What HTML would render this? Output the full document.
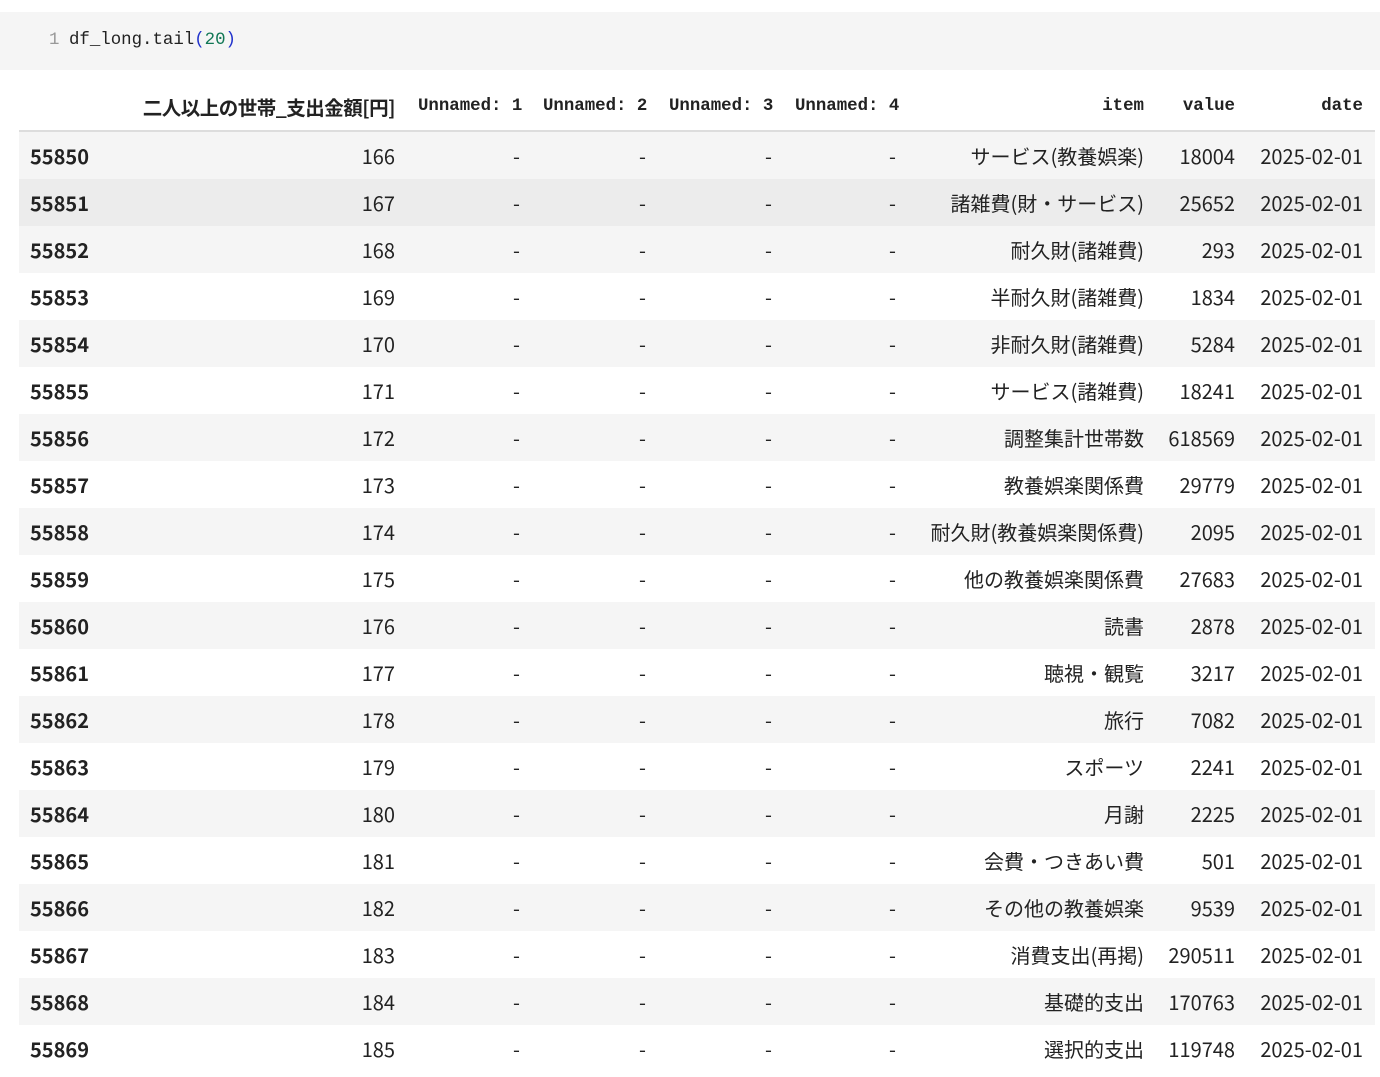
<!DOCTYPE html>
<html><head><meta charset="utf-8"><style>
body{margin:0;background:#fff;width:1380px;height:1077px;overflow:hidden;font-family:"Liberation Sans","Noto Sans CJK JP",sans-serif;color:#111;}
.code{position:absolute;left:0;top:12px;width:1380px;height:58px;background:#f5f5f5;font-family:"Liberation Mono","Noto Sans CJK JP",monospace;font-size:17.4px;line-height:58px;}
.code .n{position:absolute;left:49px;color:#999;}
.code .t{position:absolute;left:69px;color:#222;}
table{position:absolute;left:19px;top:83px;border-collapse:collapse;table-layout:fixed;width:1356px;}
th,td{padding:0 12px 0 11px;text-align:right;white-space:nowrap;overflow:visible;}
thead th{height:47px;border-bottom:2px solid #ddd;font-family:"Liberation Mono","Noto Sans CJK JP",monospace;font-size:17.4px;font-weight:bold;color:#222;}
thead th.jp{font-family:"Noto Sans CJK JP",sans-serif;font-size:19.5px;letter-spacing:-0.5px;}
tbody td,tbody th{height:47px;font-family:"Noto Sans CJK JP",sans-serif;font-size:20px;color:#222;}
tbody th{text-align:left;font-weight:bold;}
tbody tr:nth-child(odd){background:#f5f5f5;}
tbody tr.h{background:#ececec;}
</style></head><body>
<div class="code"><span class="n">1</span><span class="t">df_long.tail<span style="color:#2233cc">(</span><span style="color:#117755">20</span><span style="color:#2233cc">)</span></span></div>
<table>
<colgroup><col style="width:81px"><col style="width:307px"><col style="width:125px"><col style="width:126px"><col style="width:126px"><col style="width:124px"><col style="width:248px"><col style="width:91px"><col style="width:128px"></colgroup>
<thead><tr><th></th><th class="jp">二人以上の世帯_支出金額[円]</th><th>Unnamed: 1</th><th>Unnamed: 2</th><th>Unnamed: 3</th><th>Unnamed: 4</th><th>item</th><th>value</th><th>date</th></tr></thead>
<tbody>
<tr><th>55850</th><td>166</td><td>-</td><td>-</td><td>-</td><td>-</td><td>サービス(教養娯楽)</td><td>18004</td><td>2025-02-01</td></tr>
<tr class="h"><th>55851</th><td>167</td><td>-</td><td>-</td><td>-</td><td>-</td><td>諸雑費(財・サービス)</td><td>25652</td><td>2025-02-01</td></tr>
<tr><th>55852</th><td>168</td><td>-</td><td>-</td><td>-</td><td>-</td><td>耐久財(諸雑費)</td><td>293</td><td>2025-02-01</td></tr>
<tr><th>55853</th><td>169</td><td>-</td><td>-</td><td>-</td><td>-</td><td>半耐久財(諸雑費)</td><td>1834</td><td>2025-02-01</td></tr>
<tr><th>55854</th><td>170</td><td>-</td><td>-</td><td>-</td><td>-</td><td>非耐久財(諸雑費)</td><td>5284</td><td>2025-02-01</td></tr>
<tr><th>55855</th><td>171</td><td>-</td><td>-</td><td>-</td><td>-</td><td>サービス(諸雑費)</td><td>18241</td><td>2025-02-01</td></tr>
<tr><th>55856</th><td>172</td><td>-</td><td>-</td><td>-</td><td>-</td><td>調整集計世帯数</td><td>618569</td><td>2025-02-01</td></tr>
<tr><th>55857</th><td>173</td><td>-</td><td>-</td><td>-</td><td>-</td><td>教養娯楽関係費</td><td>29779</td><td>2025-02-01</td></tr>
<tr><th>55858</th><td>174</td><td>-</td><td>-</td><td>-</td><td>-</td><td>耐久財(教養娯楽関係費)</td><td>2095</td><td>2025-02-01</td></tr>
<tr><th>55859</th><td>175</td><td>-</td><td>-</td><td>-</td><td>-</td><td>他の教養娯楽関係費</td><td>27683</td><td>2025-02-01</td></tr>
<tr><th>55860</th><td>176</td><td>-</td><td>-</td><td>-</td><td>-</td><td>読書</td><td>2878</td><td>2025-02-01</td></tr>
<tr><th>55861</th><td>177</td><td>-</td><td>-</td><td>-</td><td>-</td><td>聴視・観覧</td><td>3217</td><td>2025-02-01</td></tr>
<tr><th>55862</th><td>178</td><td>-</td><td>-</td><td>-</td><td>-</td><td>旅行</td><td>7082</td><td>2025-02-01</td></tr>
<tr><th>55863</th><td>179</td><td>-</td><td>-</td><td>-</td><td>-</td><td>スポーツ</td><td>2241</td><td>2025-02-01</td></tr>
<tr><th>55864</th><td>180</td><td>-</td><td>-</td><td>-</td><td>-</td><td>月謝</td><td>2225</td><td>2025-02-01</td></tr>
<tr><th>55865</th><td>181</td><td>-</td><td>-</td><td>-</td><td>-</td><td>会費・つきあい費</td><td>501</td><td>2025-02-01</td></tr>
<tr><th>55866</th><td>182</td><td>-</td><td>-</td><td>-</td><td>-</td><td>その他の教養娯楽</td><td>9539</td><td>2025-02-01</td></tr>
<tr><th>55867</th><td>183</td><td>-</td><td>-</td><td>-</td><td>-</td><td>消費支出(再掲)</td><td>290511</td><td>2025-02-01</td></tr>
<tr><th>55868</th><td>184</td><td>-</td><td>-</td><td>-</td><td>-</td><td>基礎的支出</td><td>170763</td><td>2025-02-01</td></tr>
<tr><th>55869</th><td>185</td><td>-</td><td>-</td><td>-</td><td>-</td><td>選択的支出</td><td>119748</td><td>2025-02-01</td></tr>
</tbody></table>
</body></html>
